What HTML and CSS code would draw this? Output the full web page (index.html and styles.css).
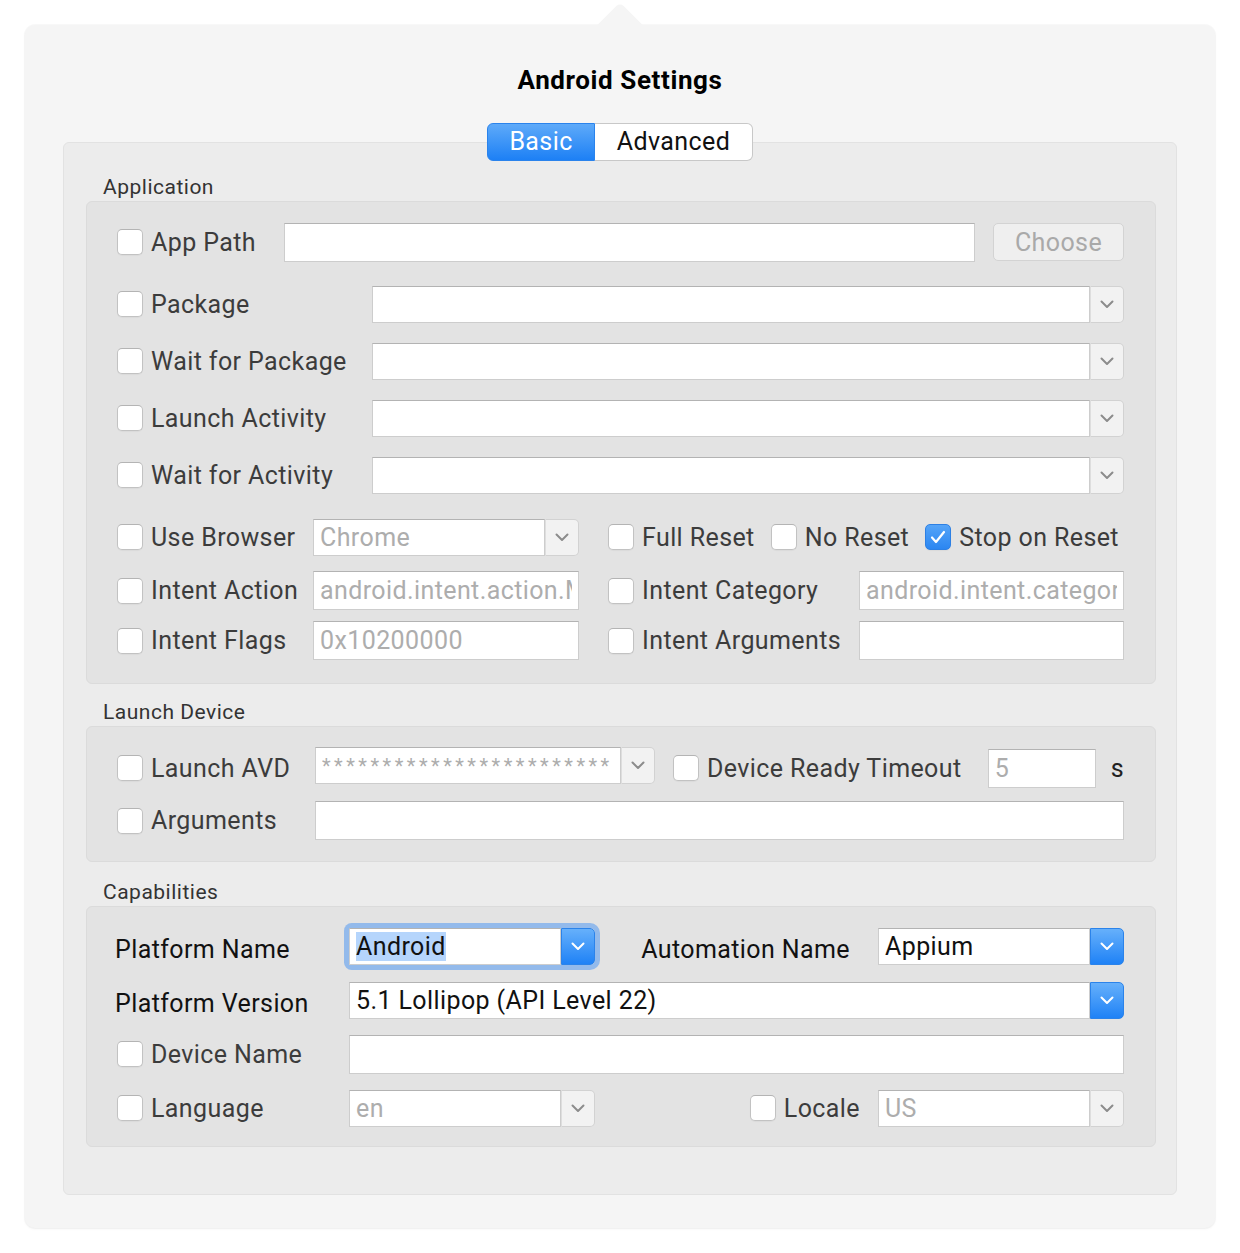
FILE: index.html
```html
<!DOCTYPE html>
<html lang="en">
<head>
    <meta charset="UTF-8">
    <meta name="viewport" content="width=device-width, initial-scale=1.0">
    <title>Android Settings</title>
    <link rel="stylesheet" href="styles.css">
</head>
<body>
    <div class="popover">
        <h1 class="title">Android Settings</h1>

        <div class="tabs">
            <div class="tab active">Basic</div>
            <div class="tab">Advanced</div>
        </div>

        <div class="tab-box">
            <!-- Application -->
            <div class="section-label">Application</div>
            <div class="group group-app">
                <div class="row">
                    <label class="check w-path"><span class="box"></span>App Path</label>
                    <input class="field grow" type="text">
                    <button class="choose">Choose</button>
                </div>

                <div class="combo-rows">
                    <div class="row">
                        <label class="check w-combo"><span class="box"></span>Package</label>
                        <div class="combo grow">
                            <input class="field" type="text">
                            <span class="combo-btn"><svg width="14" height="9" viewBox="0 0 14 9"><polyline points="1.5,1.5 7,7 12.5,1.5"/></svg></span>
                        </div>
                    </div>
                    <div class="row">
                        <label class="check w-combo"><span class="box"></span>Wait for Package</label>
                        <div class="combo grow">
                            <input class="field" type="text">
                            <span class="combo-btn"><svg width="14" height="9" viewBox="0 0 14 9"><polyline points="1.5,1.5 7,7 12.5,1.5"/></svg></span>
                        </div>
                    </div>
                    <div class="row">
                        <label class="check w-combo"><span class="box"></span>Launch Activity</label>
                        <div class="combo grow">
                            <input class="field" type="text">
                            <span class="combo-btn"><svg width="14" height="9" viewBox="0 0 14 9"><polyline points="1.5,1.5 7,7 12.5,1.5"/></svg></span>
                        </div>
                    </div>
                    <div class="row">
                        <label class="check w-combo"><span class="box"></span>Wait for Activity</label>
                        <div class="combo grow">
                            <input class="field" type="text">
                            <span class="combo-btn"><svg width="14" height="9" viewBox="0 0 14 9"><polyline points="1.5,1.5 7,7 12.5,1.5"/></svg></span>
                        </div>
                    </div>
                </div>

                <div class="opts browser-row">
                    <label class="check"><span class="box"></span>Use Browser</label>
                    <div class="combo">
                        <input class="field" type="text" placeholder="Chrome">
                        <span class="combo-btn"><svg width="14" height="9" viewBox="0 0 14 9"><polyline points="1.5,1.5 7,7 12.5,1.5"/></svg></span>
                    </div>
                    <div class="resets">
                        <label class="check"><span class="box"></span>Full Reset</label>
                        <label class="check"><span class="box"></span>No Reset</label>
                        <label class="check"><span class="box checked"><svg width="16" height="14" viewBox="0 0 16 14"><polyline points="2,7.5 6,12 14,2"/></svg></span>Stop on Reset</label>
                    </div>
                </div>

                <div class="opts intent-rows">
                    <label class="check"><span class="box"></span>Intent Action</label>
                    <input class="field" type="text" placeholder="android.intent.action.MAIN">
                    <label class="check right"><span class="box"></span>Intent Category</label>
                    <input class="field" type="text" placeholder="android.intent.category.LAUNCHER">

                    <label class="check"><span class="box"></span>Intent Flags</label>
                    <input class="field" type="text" placeholder="0x10200000">
                    <label class="check right"><span class="box"></span>Intent Arguments</label>
                    <input class="field" type="text">
                </div>
            </div>

            <!-- Launch Device -->
            <div class="section-label">Launch Device</div>
            <div class="group group-launch">
                <label class="check"><span class="box"></span>Launch AVD</label>
                <div class="combo avd">
                    <input class="field stars" type="text" placeholder="************************">
                    <span class="combo-btn"><svg width="14" height="9" viewBox="0 0 14 9"><polyline points="1.5,1.5 7,7 12.5,1.5"/></svg></span>
                </div>
                <div class="timeout">
                    <label class="check grow"><span class="box"></span>Device Ready Timeout</label>
                    <input class="field secs" type="text" placeholder="5">
                    <span class="unit">s</span>
                </div>

                <label class="check"><span class="box"></span>Arguments</label>
                <input class="field span-rest" type="text">
            </div>

            <!-- Capabilities -->
            <div class="section-label">Capabilities</div>
            <div class="group group-caps">
                <div class="plain-label">Platform Name</div>
                <div class="combo focused">
                    <div class="field"><span class="selected">Android</span></div>
                    <span class="combo-btn blue"><svg width="14" height="9" viewBox="0 0 14 9"><polyline points="1.5,1.5 7,7 12.5,1.5"/></svg></span>
                </div>
                <div class="plain-label end">Automation Name</div>
                <div class="combo">
                    <div class="field">Appium</div>
                    <span class="combo-btn blue"><svg width="14" height="9" viewBox="0 0 14 9"><polyline points="1.5,1.5 7,7 12.5,1.5"/></svg></span>
                </div>

                <div class="plain-label">Platform Version</div>
                <div class="combo span-rest">
                    <div class="field">5.1 Lollipop (API Level 22)</div>
                    <span class="combo-btn blue"><svg width="14" height="9" viewBox="0 0 14 9"><polyline points="1.5,1.5 7,7 12.5,1.5"/></svg></span>
                </div>

                <label class="check"><span class="box"></span>Device Name</label>
                <input class="field span-rest" type="text">

                <label class="check"><span class="box"></span>Language</label>
                <div class="combo">
                    <input class="field" type="text" placeholder="en">
                    <span class="combo-btn"><svg width="14" height="9" viewBox="0 0 14 9"><polyline points="1.5,1.5 7,7 12.5,1.5"/></svg></span>
                </div>
                <label class="check end locale"><span class="box"></span>Locale</label>
                <div class="combo">
                    <input class="field" type="text" placeholder="US">
                    <span class="combo-btn"><svg width="14" height="9" viewBox="0 0 14 9"><polyline points="1.5,1.5 7,7 12.5,1.5"/></svg></span>
                </div>
            </div>
        </div>
    </div>
</body>
</html>
```

FILE: styles.css
```css
* {
    margin: 0;
    padding: 0;
    box-sizing: border-box;
}

body {
    background: #fff;
    font-family: 'Roboto', 'Liberation Sans', sans-serif;
    font-size: 25px;
    letter-spacing: 0.4px;
    color: #3c3c3c;
}

.popover {
    position: relative;
    margin: 25px;
    height: 1203px;
    padding: 40px 38px 33px;
    background: #f5f5f5;
    border-radius: 10px;
    box-shadow: 0 0 0 1px rgba(0,0,0,0.025), 0 1px 3px rgba(0,0,0,0.05);
}

/* little arrow on top of the popover */
.popover::before {
    content: '';
    position: absolute;
    top: -16px;
    left: 50%;
    width: 32px;
    height: 32px;
    margin-left: -16px;
    background: #f5f5f5;
    border-radius: 5px 0 0 0;
    transform: rotate(45deg);
}

.title {
    position: relative;
    text-align: center;
    font-size: 26px;
    line-height: 30px;
    letter-spacing: 0.6px;
    font-weight: 700;
    color: #000;
}

.tabs {
    position: relative;
    z-index: 1;
    display: flex;
    justify-content: center;
    margin: 28px 0 -19px;
}

.tab {
    width: 158px;
    height: 38px;
    line-height: 36px;
    text-align: center;
    font-size: 25px;
    color: #111;
    background: #fff;
    border: 1px solid #c8c8c8;
    border-left: none;
    border-radius: 0 6px 6px 0;
}

.tab.active {
    width: 108px;
    color: #fff;
    background: linear-gradient(#5eaaf9, #1d80f5);
    border: 1px solid #2a83ec;
    border-radius: 6px 0 0 6px;
}

.tab-box {
    background: #ececec;
    border: 1px solid #e2e2e2;
    border-radius: 6px;
    padding: 32px 20px 47px 22px;
}

.section-label {
    font-size: 21px;
    line-height: 24px;
    letter-spacing: 0.5px;
    padding-left: 17px;
    margin-bottom: 2px;
    color: #333;
}

.group {
    background: #e3e3e3;
    border: 1px solid #dbdbdb;
    border-radius: 6px;
}

.group-app {
    padding: 21px 31px 23px 30px;
    margin-bottom: 16px;
}

.group-launch {
    display: grid;
    grid-template-columns: 198px 340px 1fr;
    grid-template-rows: 42px 39px;
    row-gap: 12px;
    align-items: center;
    padding: 20px 31px 21px 30px;
    margin-bottom: 18px;
}

.group-launch .avd {
    align-self: start;
}

.group-caps {
    display: grid;
    grid-template-columns: 232px 246px 1fr 246px;
    grid-auto-rows: 38px;
    row-gap: 16px;
    align-items: center;
    padding: 20px 31px 19px 30px;
}

.row {
    display: flex;
    align-items: center;
    height: 38px;
}

.combo-rows {
    display: flex;
    flex-direction: column;
    gap: 19px;
    margin-top: 24px;
}

.grow {
    flex: 1;
}

/* checkboxes */
.check {
    display: flex;
    align-items: center;
    gap: 8px;
    white-space: nowrap;
    color: #3c3c3c;
}

.w-path {
    width: 167px;
}

.w-combo {
    width: 255px;
}

.box {
    flex: none;
    display: flex;
    justify-content: center;
    align-items: center;
    width: 26px;
    height: 26px;
    background: #fff;
    border: 1px solid #c2c2c2;
    border-top-color: #b4b4b4;
    border-radius: 5px;
    box-shadow: 0 1px 1px rgba(0,0,0,0.04);
}

.box.checked {
    background: linear-gradient(#55a4f8, #2b86f1);
    border-color: #2d80e4;
}

.box svg polyline {
    fill: none;
    stroke: #fff;
    stroke-width: 2.2;
    stroke-linecap: round;
    stroke-linejoin: round;
}

.plain-label {
    color: #111;
    margin-left: -2px;
    padding-top: 6px;
    white-space: nowrap;
}

.end {
    justify-self: end;
}

.plain-label.end {
    margin-right: 28px;
}

.check.locale {
    margin-right: 18px;
}

/* text fields */
.field {
    display: block;
    width: 100%;
    height: 39px;
    padding: 0 6px;
    font-family: inherit;
    font-size: 25px;
    letter-spacing: 0.4px;
    line-height: 37px;
    color: #111;
    background: #fff;
    border: 1px solid #cdcdcd;
    border-top-color: #b3b3b3;
    outline: none;
    white-space: nowrap;
    overflow: hidden;
}

.field::placeholder {
    color: #adadad;
}

.field.stars {
    font-size: 20px;
    letter-spacing: 3.5px;
}

.choose {
    width: 131px;
    height: 38px;
    margin-left: 18px;
    font-family: inherit;
    font-size: 25px;
    letter-spacing: 0.4px;
    color: #a9a9a9;
    background: #efefef;
    border: 1px solid #d3d3d3;
    border-radius: 5px;
}

/* combo boxes */
.combo {
    display: flex;
    height: 37px;
    border-radius: 0 5px 5px 0;
}

.combo .field {
    flex: 1;
    height: 37px;
    line-height: 35px;
}

.combo-btn {
    flex: none;
    display: flex;
    justify-content: center;
    align-items: center;
    width: 34px;
    background: #f2f2f2;
    border: 1px solid #d2d2d2;
    border-left-color: #dedede;
    border-radius: 0 5px 5px 0;
}

.combo-btn svg polyline {
    fill: none;
    stroke: #8c8c8c;
    stroke-width: 2;
    stroke-linecap: round;
    stroke-linejoin: round;
}

.combo-btn.blue {
    background: linear-gradient(#66b0fb, #1f82f6);
    border-color: #2b83ea;
}

.combo-btn.blue svg polyline {
    stroke: #fff;
}

.combo.focused {
    box-shadow: 0 0 0 5px rgba(93, 158, 240, 0.6);
    border-radius: 3px 5px 5px 3px;
}

.selected {
    background: #b5d5fc;
}

/* application options grid */
.opts {
    display: grid;
    grid-template-columns: 196px 266px 280px 1fr;
    align-items: center;
}

.browser-row {
    grid-template-rows: 38px;
    margin-top: 24px;
}

.intent-rows {
    grid-template-rows: 39px 39px;
    row-gap: 11px;
    margin-top: 15px;
}

.opts .right {
    padding-left: 29px;
}

.resets {
    grid-column: 3 / 5;
    display: flex;
    gap: 16px;
    padding-left: 29px;
}

/* launch device */
.timeout {
    display: flex;
    align-items: center;
    margin-left: 18px;
}

.field.secs {
    width: 108px;
}

.unit {
    margin-left: 15px;
    color: #222;
}

.span-rest {
    grid-column: 2 / -1;
}
```
